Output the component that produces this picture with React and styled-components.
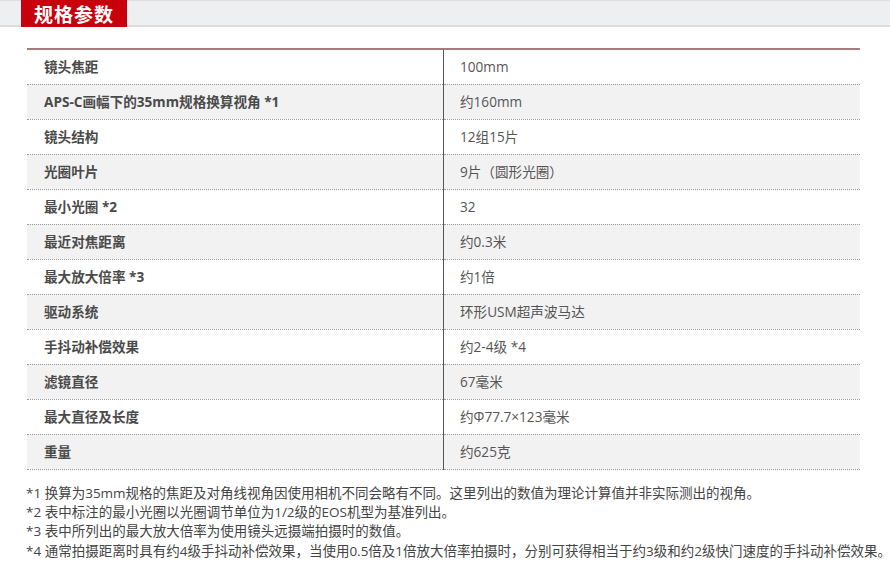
import React from "react";
import styled, { createGlobalStyle } from "styled-components";

const specs = [
    {label: "镜头焦距", value: "100mm"},
    {label: "APS-C画幅下的35mm规格换算视角 *1", value: "约160mm"},
    {label: "镜头结构", value: "12组15片"},
    {label: "光圈叶片", value: "9片（圆形光圈）"},
    {label: "最小光圈 *2", value: "32"},
    {label: "最近对焦距离", value: "约0.3米"},
    {label: "最大放大倍率 *3", value: "约1倍"},
    {label: "驱动系统", value: "环形USM超声波马达"},
    {label: "手抖动补偿效果", value: "约2-4级 *4"},
    {label: "滤镜直径", value: "67毫米"},
    {label: "最大直径及长度", value: "约Φ77.7×123毫米"},
    {label: "重量", value: "约625克"},
];

const notes = [
    "*1 换算为35mm规格的焦距及对角线视角因使用相机不同会略有不同。这里列出的数值为理论计算值并非实际测出的视角。",
    "*2 表中标注的最小光圈以光圈调节单位为1/2级的EOS机型为基准列出。",
    "*3 表中所列出的最大放大倍率为使用镜头远摄端拍摄时的数值。",
    "*4 通常拍摄距离时具有约4级手抖动补偿效果，当使用0.5倍及1倍放大倍率拍摄时，分别可获得相当于约3级和约2级快门速度的手抖动补偿效果。",
];

export default function App() {
    return (
        <>
            <GlobalStyle />
            <TitleBar>
                <Tab>规格参数</Tab>
            </TitleBar>
            <Content>
                <SpecTable>
                    <tbody>
                        {specs.map((s, idx) => (
                            <Row key={idx} $shaded={idx % 2 === 1}>
                                <Label>{s.label}</Label>
                                <Value>{s.value}</Value>
                            </Row>
                        ))}
                    </tbody>
                </SpecTable>
                <Notes>
                    {notes.map((n, idx) => <p key={idx}>{n}</p>)}
                </Notes>
            </Content>
        </>
    );
}

const GlobalStyle = createGlobalStyle`
    body {
        margin: 0;
        background: #fff;
        font-family: "Open Sans", "Noto Sans CJK SC", sans-serif;
    }
`

const TitleBar = styled.div`
    height: 24px;
    background-color: #eeeff0;
    border-top: 1px solid #dedede;
    border-bottom: 2px solid #dcdcdc;
    padding-left: 21px;
    display: flex;
    align-items: stretch;
`

const Tab = styled.div`
    margin-top: -1px;
    margin-bottom: -2px;
    width: 106px;
    background-color: #c7000b;
    color: #fff;
    font-family: "Noto Sans CJK SC", sans-serif;
    font-weight: 700;
    font-size: 19px;
    line-height: 27px;
    text-align: center;
    letter-spacing: 1px;
`

const Content = styled.div`
    padding: 21px 30px 0 27px;
`

const SpecTable = styled.table`
    width: 833px;
    border-collapse: collapse;
    border-top: 2px solid #a87c7c;
    font-size: 13.6px;
`

const Row = styled.tr`
    height: 35px;
    background-color: ${(p) => (p.$shaded ? "#f2f2f2" : "#fff")};
    border-bottom: 1px dotted #9a9a9a;
`

const Label = styled.td`
    width: 399px;
    padding: 0 0 1px 17px;
    font-weight: 700;
    color: #4a4a4a;
    border-right: 1px solid #555;
`

const Value = styled.td`
    padding: 0 0 1px 16px;
    color: #555;
`

const Notes = styled.div`
    margin-top: 14px;
    margin-left: -1px;
    font-size: 13.5px;
    color: #444;
    white-space: nowrap;

    p {
        margin: 0;
        line-height: 19.4px;
    }
`
